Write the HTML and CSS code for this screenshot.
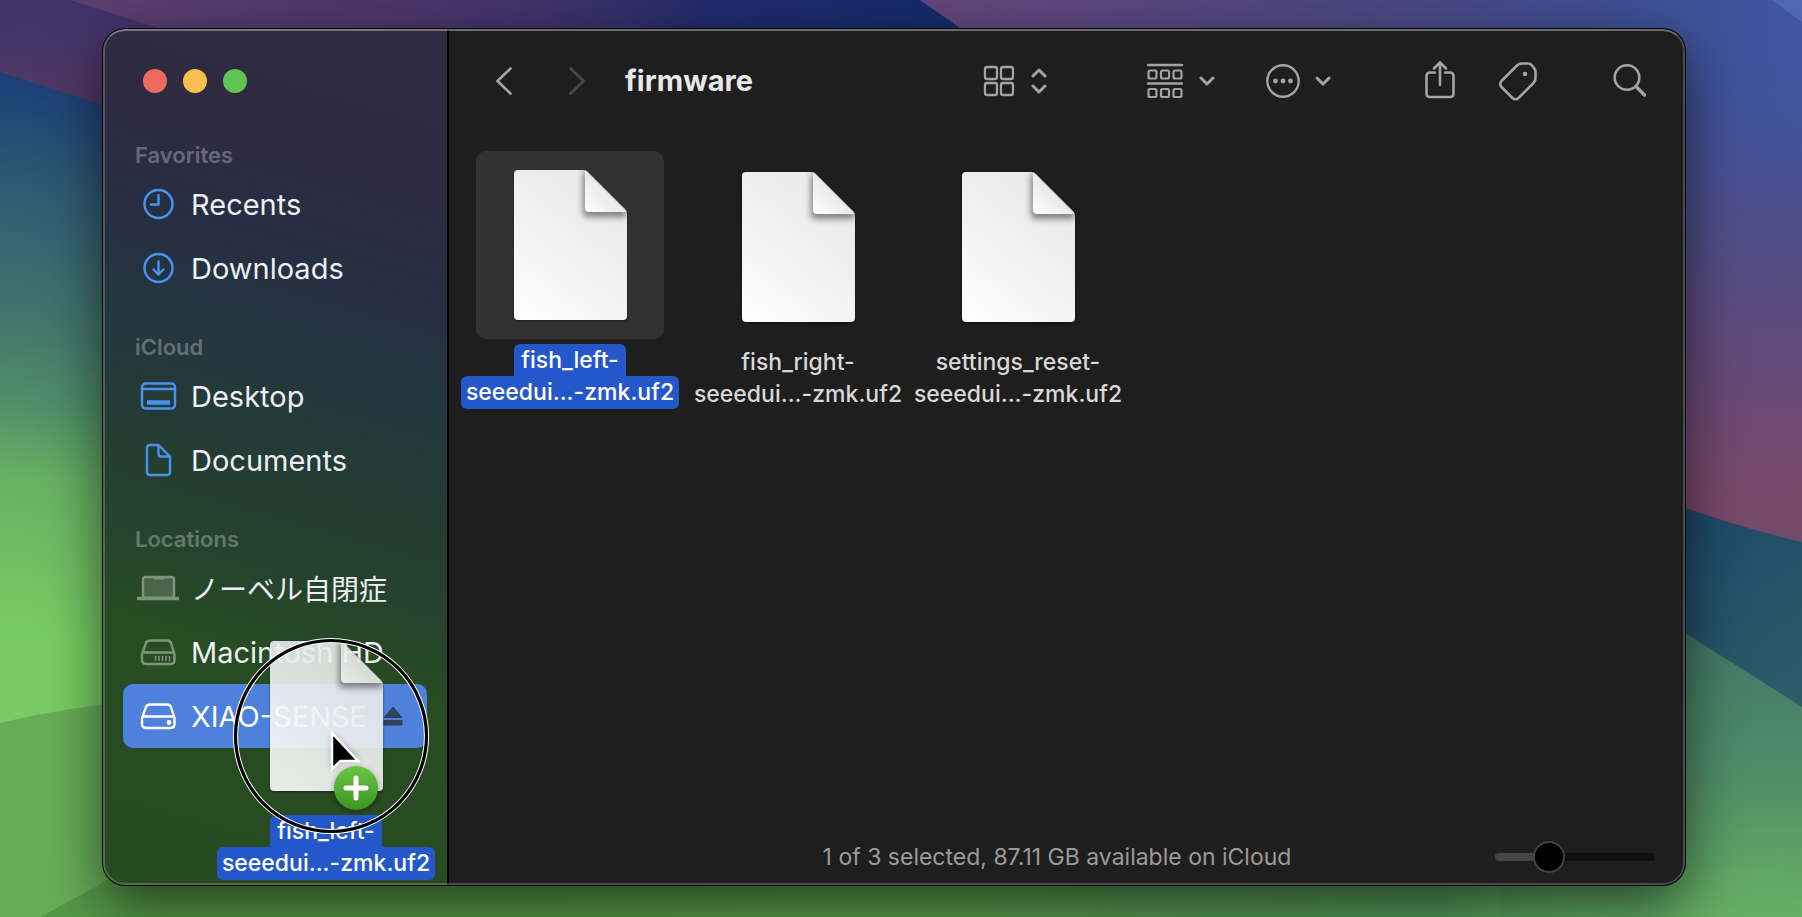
FILE: index.html
```html
<!DOCTYPE html>
<html lang="en">
<head>
<meta charset="utf-8">
<meta name="viewport" content="width=device-width, initial-scale=1">
<title>firmware</title>
<link rel="stylesheet" href="styles.css">
</head>
<body>
<svg class="wallpaper" viewBox="0 0 1802 917" preserveAspectRatio="none" aria-hidden="true">
  <defs>
    <linearGradient id="w-left" gradientUnits="userSpaceOnUse" x1="0" y1="0" x2="-110" y2="917">
      <stop offset="0.08" stop-color="#1c3f78"/><stop offset="0.2" stop-color="#2f5a72"/><stop offset="0.36" stop-color="#467a6c"/>
      <stop offset="0.43" stop-color="#4f8f68"/><stop offset="0.51" stop-color="#66b062"/><stop offset="0.68" stop-color="#78cc63"/>
    </linearGradient>
    <linearGradient id="w-purple" gradientUnits="userSpaceOnUse" x1="0" y1="0" x2="960" y2="0">
      <stop offset="0" stop-color="#3f3569"/><stop offset="0.3" stop-color="#40326c"/><stop offset="0.55" stop-color="#362f6b"/>
      <stop offset="0.75" stop-color="#202b6b"/><stop offset="1" stop-color="#142a69"/>
    </linearGradient>
    <linearGradient id="w-blush" gradientUnits="userSpaceOnUse" x1="0" y1="20" x2="0" y2="110">
      <stop offset="0" stop-color="#543a66" stop-opacity="0"/><stop offset="1" stop-color="#573862"/>
    </linearGradient>
    <linearGradient id="w-pink" gradientUnits="userSpaceOnUse" x1="90" y1="0" x2="700" y2="0">
      <stop offset="0" stop-color="#5c3f6f"/><stop offset="0.4" stop-color="#4f376b"/><stop offset="1" stop-color="#4f376b" stop-opacity="0"/>
    </linearGradient>
    <linearGradient id="w-violet" gradientUnits="userSpaceOnUse" x1="920" y1="0" x2="1802" y2="0">
      <stop offset="0" stop-color="#64467b"/><stop offset="0.5" stop-color="#4c4782"/><stop offset="0.8" stop-color="#3e4f93"/><stop offset="1" stop-color="#4056a0"/>
    </linearGradient>
    <linearGradient id="w-rose" gradientUnits="userSpaceOnUse" x1="0" y1="60" x2="0" y2="540">
      <stop offset="0" stop-color="#43539a" stop-opacity="0"/><stop offset="0.3" stop-color="#4c4f8c"/><stop offset="0.65" stop-color="#654a77"/><stop offset="0.9" stop-color="#78496a"/><stop offset="1" stop-color="#744a69"/>
    </linearGradient>
    <linearGradient id="w-teal" gradientUnits="userSpaceOnUse" x1="1680" y1="510" x2="1802" y2="680">
      <stop offset="0" stop-color="#1d4868"/><stop offset="1" stop-color="#2c5c69"/>
    </linearGradient>
    <linearGradient id="w-green" gradientUnits="userSpaceOnUse" x1="0" y1="640" x2="0" y2="917">
      <stop offset="0" stop-color="#43786a"/><stop offset="0.5" stop-color="#4f8f66"/><stop offset="1" stop-color="#66b065"/>
    </linearGradient>
    <linearGradient id="w-floor" gradientUnits="userSpaceOnUse" x1="0" y1="0" x2="1802" y2="0">
      <stop offset="0" stop-color="#549848"/><stop offset="0.5" stop-color="#5a9c4a"/><stop offset="0.8" stop-color="#54985a"/><stop offset="1" stop-color="#66b065" stop-opacity="0"/>
    </linearGradient>
  </defs>
  <rect width="1802" height="917" fill="url(#w-left)"/>
  <path d="M0 0H1000V200H400L0 72Z" fill="url(#w-purple)"/>
  <path d="M0 0H600V200H400L0 72Z" fill="url(#w-blush)"/>
  <path d="M0 72 110 108V300H0Z" fill="url(#w-left)"/>
  <path d="M70 0H700V60H260Z" fill="url(#w-pink)"/>
  <path d="M920 0H1802V560H1500L1400 400L960 28Z" fill="url(#w-violet)"/>
  <path d="M1600 60H1802V545H1600Z" fill="url(#w-rose)"/>
  <path d="M1772 0H1802V22Z" fill="#5068b4"/>
  <path d="M1600 475Q1700 518 1802 542V760H1600Z" fill="url(#w-teal)"/>
  <path d="M1500 550L1685 633L1802 707V917H1500Z" fill="url(#w-green)"/>
  <path d="M0 723Q60 708 130 702L900 820V917H0Z" fill="#67ad57"/>
  <path d="M40 917 130 868H1802V917Z" fill="url(#w-floor)"/>
</svg>

<svg class="defs" aria-hidden="true">
  <defs>
    <linearGradient id="paper" gradientUnits="userSpaceOnUse" x1="10" y1="150" x2="90" y2="50"><stop offset="0" stop-color="#fdfdfd"/><stop offset="1" stop-color="#ebebeb"/></linearGradient>
    <linearGradient id="fold" x1="0" y1="1" x2="0.5" y2="0.5"><stop offset="0" stop-color="#fff"/><stop offset="1" stop-color="#e9e9e9"/></linearGradient>
    <filter id="soft" x="-50%" y="-50%" width="200%" height="200%"><feGaussianBlur stdDeviation="3"/></filter>
    <clipPath id="sheet"><path d="M4 0H69Q72 0 74 2L111 39Q113 41 113 44V146Q113 150 109 150H4Q0 150 0 146V4Q0 0 4 0Z"/></clipPath>
    <linearGradient id="badge" x1="0" y1="0" x2="0" y2="1"><stop offset="0" stop-color="#6cc644"/><stop offset="1" stop-color="#3c9422"/></linearGradient>
  </defs>
  <symbol id="doc" viewBox="0 0 113 150">
    <g clip-path="url(#sheet)">
      <rect width="113" height="150" fill="url(#paper)"/>
      <path d="M69 4V43Q69 47 74 47H113V42L71 0Z" fill="#000" opacity="0.45" filter="url(#soft)"/>
      <path d="M71 0V38Q71 42 75 42H113Z" fill="url(#fold)"/>
    </g>
  </symbol>
  <symbol id="chev" viewBox="0 0 16 10"><path d="M2 2 8 8 14 2" fill="none" stroke="currentColor" stroke-width="3" stroke-linecap="round" stroke-linejoin="round"/></symbol>
</svg>

<main class="window">
  <aside class="sidebar">
    <div class="lights">
      <button class="light light-close" aria-label="Close"></button>
      <button class="light light-min" aria-label="Minimize"></button>
      <button class="light light-zoom" aria-label="Zoom"></button>
    </div>
    <nav class="places">
      <section>
        <h2 class="heading">Favorites</h2>
        <a class="place" href="#recents">
          <svg class="icon blue" viewBox="0 0 42 36"><circle cx="21.500" cy="18" r="14"/><path d="M21.500 9V18.500H14"/></svg>
          <span>Recents</span></a>
        <a class="place" href="#downloads">
          <svg class="icon blue" viewBox="0 0 42 36"><circle cx="21.500" cy="18" r="14"/><path d="M21.500 11.500V24M16.500 19.500 21.500 24.500 26.500 19.500"/></svg>
          <span>Downloads</span></a>
      </section>
      <section>
        <h2 class="heading">iCloud</h2>
        <a class="place" href="#desktop">
          <svg class="icon blue" viewBox="0 0 42 36"><rect x="5" y="5.500" width="33" height="25" rx="3.500"/><path d="M5 11H38"/><path d="M10 24.500H33" stroke-width="4.500" stroke-linecap="butt"/></svg>
          <span>Desktop</span></a>
        <a class="place" href="#documents">
          <svg class="icon blue" viewBox="0 0 42 36"><path d="M12.500 3H21.500L33 14.500V30Q33 33 30 33H13Q10 33 10 30V6Q10 3 13 3ZM21.500 3V12Q21.500 14.500 24 14.500H33"/></svg>
          <span>Documents</span></a>
      </section>
      <section>
        <h2 class="heading">Locations</h2>
        <a class="place" href="#mac">
          <svg class="icon grey" viewBox="0 0 42 36"><rect x="6" y="7" width="31" height="21" rx="2.500" fill="currentColor" fill-opacity="0.4"/><path d="M17 8H26" stroke-width="3"/><path d="M1 28.500H41" stroke-width="3.500"/></svg>
          <span lang="ja">ノーベル自閉症</span></a>
        <a class="place" href="#macintosh-hd">
          <svg class="icon grey" viewBox="0 0 42 36"><path d="M13 6.500H30Q33 6.500 34 9L37.500 20V26Q37.500 30 33.500 30H9Q5 30 5 26V20L9 9Q10 6.500 13 6.500ZM6 18.500H37"/><path d="M18.500 22.500V26.500M22 22.500V26.500M25.500 22.500V26.500M29 22.500V26.500M32.500 22.500V26.500" stroke-width="1.500"/></svg>
          <span>Macintosh HD</span></a>
        <a class="place place-target" href="#xiao-sense">
          <svg class="icon" viewBox="0 0 42 36"><path d="M13 6.500H30Q33 6.500 34 9L37.500 20V26Q37.500 30 33.500 30H9Q5 30 5 26V20L9 9Q10 6.500 13 6.500ZM6 18.500H37"/><circle cx="32" cy="24.500" r="1.200" fill="currentColor"/></svg>
          <span>XIAO-SENSE</span>
          <svg class="eject" viewBox="0 0 20 20"><path d="M10 1 19 11.500H1ZM1 14.500H19V19H1Z" fill="currentColor" stroke="currentColor" stroke-linejoin="round"/></svg></a>
      </section>
    </nav>
    <div class="drag" aria-hidden="true">
      <svg class="paper ghost"><use href="#doc"/></svg>
      <span class="name picked"><span class="line first">fish_left-</span><span class="line">seeedui...-zmk.uf2</span></span>
      <svg class="pointer" viewBox="0 0 198 198">
        <circle cx="99" cy="99" r="95.500" fill="none" stroke="#fff" stroke-width="5.200"/>
        <circle cx="99" cy="99" r="95.500" fill="none" stroke="#000" stroke-width="3.200"/>
        <circle cx="124" cy="153" r="22" fill="#000" opacity="0.35" filter="url(#soft)"/>
        <path d="M100 97V133L109 124L128 122Z" fill="#000" opacity="0.3" filter="url(#soft)"/>
        <path d="M100 96V132L108.500 124H126Z" fill="#000" stroke="#fff" stroke-width="2.500"/>
        <circle cx="124" cy="151" r="22" fill="url(#badge)"/>
        <path d="M124 141V161M114 151H134" stroke="#fff" stroke-width="5" stroke-linecap="round"/>
      </svg>
    </div>
  </aside>

  <div class="pane">
    <header class="toolbar">
      <button class="tool" aria-label="Back"><svg width="18" height="30" viewBox="0 0 18 30"><path d="M15.500 2.500 2.500 15 15.500 27.500"/></svg></button>
      <button class="tool dim" aria-label="Forward"><svg width="18" height="30" viewBox="0 0 18 30"><path d="M2.500 2.500 15.500 15 2.500 27.500"/></svg></button>
      <h1 class="title">firmware</h1>
      <button class="tool view" aria-label="View as icons">
        <svg width="32" height="32" viewBox="0 0 32 32"><g stroke-width="2.300"><rect x="2" y="2" width="12" height="12" rx="2"/><rect x="18" y="2" width="12" height="12" rx="2"/><rect x="2" y="18" width="12" height="12" rx="2"/><rect x="18" y="18" width="12" height="12" rx="2"/></g></svg>
        <svg width="16" height="28" viewBox="0 0 16 28"><path d="M2 9 8 3 14 9M2 19 8 25 14 19" stroke-width="3"/></svg>
      </button>
      <button class="tool group" aria-label="Group items">
        <svg width="36" height="36" viewBox="0 0 36 36"><path d="M1 2H35M1 20.500H35" stroke-width="2.300"/><g stroke-width="2.200"><rect x="1.500" y="7.500" width="8" height="8" rx="1.500"/><rect x="14" y="7.500" width="8" height="8" rx="1.500"/><rect x="26.500" y="7.500" width="8" height="8" rx="1.500"/><rect x="1.500" y="26" width="8" height="8" rx="1.500"/><rect x="14" y="26" width="8" height="8" rx="1.500"/><rect x="26.500" y="26" width="8" height="8" rx="1.500"/></g></svg>
        <svg width="16" height="10"><use href="#chev"/></svg>
      </button>
      <button class="tool more" aria-label="More actions">
        <svg width="34" height="34" viewBox="0 0 34 34"><circle cx="17" cy="17" r="15.700" stroke-width="2.400"/><g fill="currentColor" stroke="none"><circle cx="9.500" cy="17" r="2.400"/><circle cx="17" cy="17" r="2.400"/><circle cx="24.500" cy="17" r="2.400"/></g></svg>
        <svg width="16" height="10"><use href="#chev"/></svg>
      </button>
      <button class="tool share" aria-label="Share"><svg width="30" height="40" viewBox="0 0 30 40"><path d="M10 11.500H5Q1.500 11.500 1.500 15V32.500Q1.500 36 5 36H25Q28.500 36 28.500 32.500V15Q28.500 11.500 25 11.500H20M15 24V2M9 7.500 15 1.500 21 7.500"/></svg></button>
      <button class="tool tag" aria-label="Edit tags"><svg width="38" height="40" viewBox="0 0 38 40"><path d="M18 4.500Q20 2.500 22.500 2.500H29Q31 2.500 32.500 4L35 7Q36.500 8.500 36.500 10.500V17.500Q36.500 20 34.500 22L19.500 37Q16.500 39.500 13.500 37L2.500 26Q0 23 2.500 20Z"/><circle cx="26" cy="13" r="2.300" fill="currentColor" stroke="none"/></svg></button>
      <button class="tool search" aria-label="Search"><svg width="34" height="36" viewBox="0 0 34 36"><circle cx="14" cy="14.500" r="12.300"/><path d="M23.500 24 31.500 32" stroke-width="3.500"/></svg></button>
    </header>

    <div class="files">
      <button class="file file-picked">
        <span class="tile"><svg class="paper"><use href="#doc"/></svg></span>
        <span class="name picked"><span class="line first">fish_left-</span><span class="line">seeedui...-zmk.uf2</span></span>
      </button>
      <button class="file">
        <span class="tile"><svg class="paper"><use href="#doc"/></svg></span>
        <span class="name"><span class="line">fish_right-</span><span class="line">seeedui...-zmk.uf2</span></span>
      </button>
      <button class="file">
        <span class="tile"><svg class="paper"><use href="#doc"/></svg></span>
        <span class="name"><span class="line">settings_reset-</span><span class="line">seeedui...-zmk.uf2</span></span>
      </button>
    </div>

    <footer class="status">
      <p class="summary">1 of 3 selected, 87.11 GB available on iCloud</p>
      <input class="size" type="range" min="0" max="100" value="30" aria-label="Icon size">
    </footer>
  </div>
</main>
</body>
</html>
```

FILE: styles.css
```css
* { box-sizing: border-box; }

body {
  margin: 0;
  height: 100vh;
  padding: 29px 117px 32px 103px;
  overflow: hidden;
  font-family: Inter, "Noto Sans CJK JP", sans-serif;
  color: #e6e8ea;
  background: #3f6e68;
}

h1, h2, p { margin: 0; }

button {
  padding: 0;
  border: 0;
  background: none;
  font: inherit;
  color: inherit;
}

svg { display: block; flex: none; }

.wallpaper {
  position: absolute;
  inset: 0;
  width: 100%;
  height: 100%;
}

.defs { position: absolute; width: 0; height: 0; }

.window {
  position: relative;
  display: flex;
  height: 100%;
  border-radius: 22px;
  overflow: hidden;
  background: #1e1e1e;
  box-shadow: 0 0 0 1px #07080c, 0 20px 56px rgba(0, 0, 0, 0.6);
}

.window::after {
  content: "";
  position: absolute;
  inset: 0;
  border: 2px solid rgba(255, 255, 255, 0.2);
  border-top-color: rgba(255, 255, 255, 0.35);
  border-radius: 22px;
  pointer-events: none;
}

/* Sidebar */
.sidebar {
  position: relative;
  flex: none;
  width: 346px;
  padding: 0 20px;
  border-right: 2px solid #000;
  background: linear-gradient(196deg, #2f2b40 4%, #2d2b41 20%, #262f42 29%, #233640 38%, #243c35 50%, #25432b 62%, #284c22 72%, #274a22 100%);
}

.lights {
  display: flex;
  gap: 16px;
  padding: 40px 20px 45px;
}

.light { width: 24px; height: 24px; border-radius: 50%; }
.light-close { background: #ed6a5f; }
.light-min { background: #f5bf4f; }
.light-zoom { background: #61c554; }

.places { display: flex; flex-direction: column; gap: 30px; }

.heading {
  padding-left: 12px;
  font-size: 22px;
  line-height: 34px;
  font-weight: 600;
  color: rgba(255, 255, 255, 0.3);
}

.place {
  display: flex;
  align-items: center;
  height: 64px;
  padding: 0 24px 0 14px;
  border-radius: 10px;
  font-size: 29px;
  color: #eceff3;
  text-decoration: none;
  white-space: nowrap;
}

.place [lang="ja"] { font-size: 28px; }

.place-target { background: #4e81db; color: #fff; }

.icon {
  width: 42px;
  height: 36px;
  margin-right: 12px;
  fill: none;
  stroke: currentColor;
  stroke-width: 2.4;
  stroke-linecap: round;
  stroke-linejoin: round;
}

.blue { color: #4793ee; }
.grey { color: #7f947c; }

.eject { width: 20px; height: 20px; margin-left: auto; color: #34415c; }

/* File being dragged */
.drag {
  position: absolute;
  left: 114px;
  bottom: 5px;
  display: flex;
  flex-direction: column;
  align-items: center;
  gap: 24px;
  width: 218px;
}

.ghost { opacity: 0.9; }

.pointer {
  position: absolute;
  left: 15px;
  top: -4px;
  width: 198px;
  height: 198px;
}

/* Toolbar */
.pane { flex: 1; min-width: 0; display: flex; flex-direction: column; }

.toolbar {
  display: flex;
  align-items: center;
  height: 103px;
  padding: 0 38px 0 46px;
}

.tool { display: flex; align-items: center; color: #a3a3a3; }

.tool > svg {
  fill: none;
  stroke: currentColor;
  stroke-width: 2.6;
  stroke-linecap: round;
  stroke-linejoin: round;
}

.dim { margin-left: 55px; color: #4a4a4a; }

.title {
  flex: 1;
  margin-left: 39px;
  font-size: 29px;
  line-height: 36px;
  font-weight: 700;
}

.view { gap: 16px; margin-right: 100px; }
.group { gap: 16px; margin-right: 51px; }
.more { gap: 15px; margin-right: 94px; }
.share { margin-right: 44px; }
.tag { margin-right: 76px; }

/* Files */
.files {
  flex: 1;
  display: flex;
  align-items: flex-start;
  gap: 2px;
  padding: 21px 12px;
}

.file {
  display: flex;
  flex-direction: column;
  align-items: center;
  gap: 5px;
  width: 218px;
}

.file-picked { margin: -2px 8px 0 0; }
.file-picked .tile { background: #323232; }

.tile {
  display: flex;
  align-items: center;
  justify-content: center;
  width: 188px;
  height: 188px;
  border-radius: 10px;
}

.paper {
  width: 113px;
  height: 150px;
  filter: drop-shadow(0 1px 1px rgba(0, 0, 0, 0.5));
}

.name {
  display: flex;
  flex-direction: column;
  align-items: center;
  font-size: 23px;
  font-weight: 500;
  line-height: 32px;
  color: #d8d8d8;
  white-space: nowrap;
}

.picked { color: #fff; }

.picked .line {
  padding: 0 5px 1px;
  border-radius: 6px;
  background: #2457c9;
}

.picked .first { padding: 0 7px; border-radius: 6px 6px 0 0; }

/* Status bar */
.status {
  display: grid;
  grid-template-columns: 1fr auto 1fr;
  align-items: center;
  height: 56px;
  padding: 0 30px 0 10px;
}

.summary { grid-column: 2; font-size: 23px; line-height: 28px; color: #9b9b9b; }

.size {
  justify-self: end;
  width: 160px;
  height: 32px;
  margin: 0;
  appearance: none;
  background: none;
}

.size::-webkit-slider-runnable-track {
  height: 8px;
  border-radius: 4px;
  background: linear-gradient(90deg, #454545 35%, #101010 35%);
}

.size::-webkit-slider-thumb {
  appearance: none;
  width: 32px;
  height: 32px;
  margin-top: -12px;
  border: 2px solid #424242;
  border-radius: 50%;
  background: #000;
}
```
